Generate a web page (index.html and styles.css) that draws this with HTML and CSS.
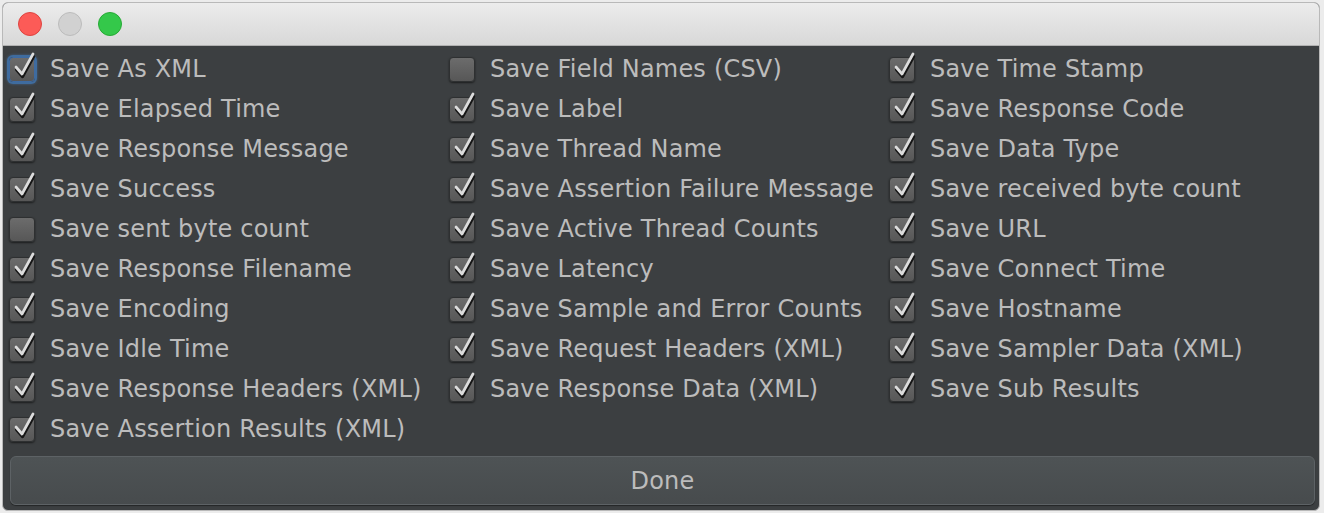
FILE: index.html
```html
<!DOCTYPE html>
<html>
<head>
<meta charset="utf-8">
<link rel="stylesheet" href="styles.css">
</head>
<body>
<div class="window">
  <div class="titlebar">
    <span class="light red"></span>
    <span class="light gray"></span>
    <span class="light green"></span>
  </div>
  <div class="content">
    <div class="grid">
      <label class="item"><span class="box focus on"></span><span class="text">Save As XML</span></label>
      <label class="item"><span class="box"></span><span class="text">Save Field Names (CSV)</span></label>
      <label class="item"><span class="box on"></span><span class="text">Save Time Stamp</span></label>

      <label class="item"><span class="box on"></span><span class="text">Save Elapsed Time</span></label>
      <label class="item"><span class="box on"></span><span class="text">Save Label</span></label>
      <label class="item"><span class="box on"></span><span class="text">Save Response Code</span></label>

      <label class="item"><span class="box on"></span><span class="text">Save Response Message</span></label>
      <label class="item"><span class="box on"></span><span class="text">Save Thread Name</span></label>
      <label class="item"><span class="box on"></span><span class="text">Save Data Type</span></label>

      <label class="item"><span class="box on"></span><span class="text">Save Success</span></label>
      <label class="item"><span class="box on"></span><span class="text">Save Assertion Failure Message</span></label>
      <label class="item"><span class="box on"></span><span class="text">Save received byte count</span></label>

      <label class="item"><span class="box"></span><span class="text">Save sent byte count</span></label>
      <label class="item"><span class="box on"></span><span class="text">Save Active Thread Counts</span></label>
      <label class="item"><span class="box on"></span><span class="text">Save URL</span></label>

      <label class="item"><span class="box on"></span><span class="text">Save Response Filename</span></label>
      <label class="item"><span class="box on"></span><span class="text">Save Latency</span></label>
      <label class="item"><span class="box on"></span><span class="text">Save Connect Time</span></label>

      <label class="item"><span class="box on"></span><span class="text">Save Encoding</span></label>
      <label class="item"><span class="box on"></span><span class="text">Save Sample and Error Counts</span></label>
      <label class="item"><span class="box on"></span><span class="text">Save Hostname</span></label>

      <label class="item"><span class="box on"></span><span class="text">Save Idle Time</span></label>
      <label class="item"><span class="box on"></span><span class="text">Save Request Headers (XML)</span></label>
      <label class="item"><span class="box on"></span><span class="text">Save Sampler Data (XML)</span></label>

      <label class="item"><span class="box on"></span><span class="text">Save Response Headers (XML)</span></label>
      <label class="item"><span class="box on"></span><span class="text">Save Response Data (XML)</span></label>
      <label class="item"><span class="box on"></span><span class="text">Save Sub Results</span></label>

      <label class="item"><span class="box on"></span><span class="text">Save Assertion Results (XML)</span></label>
    </div>
    <button class="done">Done</button>
  </div>
</div>
</body>
</html>
```

FILE: styles.css
```css
html, body {
  margin: 0;
  padding: 0;
  background: #ececec;
}
body {
  width: 1324px;
  height: 513px;
  overflow: hidden;
  font-family: "DejaVu Sans", "Liberation Sans", sans-serif;
}
.window {
  margin: 2px 0 0 2px;
  width: 1318px;
  height: 509px;
  border: 1px solid #b9b9b9;
  border-radius: 6px;
  overflow: hidden;
  box-sizing: border-box;
  display: flex;
  flex-direction: column;
  background: #3c3f41;
}
.titlebar {
  height: 42px;
  flex: none;
  background: linear-gradient(#ececec, #d8d8d8);
  border-bottom: 1px solid #b1b1b1;
  display: flex;
  align-items: center;
  gap: 16px;
  padding-left: 15px;
  box-sizing: content-box;
}
.light {
  width: 24px;
  height: 24px;
  border-radius: 50%;
  box-sizing: border-box;
}
.red { background: #fc5b57; border: 1px solid #de4440; }
.gray { background: #d1d1d1; border: 1px solid #bcbcbc; }
.green { background: #34c84a; border: 1px solid #27aa35; }

.content {
  flex: 1;
  display: flex;
  flex-direction: column;
  padding: 3px 6px 0 6px;
}
.grid {
  display: grid;
  grid-template-columns: 440px 440px 1fr;
  grid-auto-rows: 40px;
}
.item {
  display: flex;
  align-items: center;
  gap: 15px;
  color: #bcbcbc;
  font-size: 24px;
  letter-spacing: 0.2px;
  white-space: nowrap;
}
.box {
  position: relative;
  width: 26px;
  height: 25px;
  flex: none;
  box-sizing: border-box;
  border: 1px solid #2e3031;
  border-radius: 4px;
  background: linear-gradient(#6c6c6c, #575757);
  box-shadow: 0 1px 2px rgba(0,0,0,0.55);
}
.box.focus {
  border-color: #3d6aa3;
  box-shadow: 0 0 0 2px #3f6c9e, 0 0 3px 2px rgba(80,140,210,0.5);
}
.box.on::after {
  content: "";
  position: absolute;
  left: 1px;
  top: -7px;
  width: 26px;
  height: 30px;
  background: url("data:image/svg+xml;utf8,<svg xmlns='http://www.w3.org/2000/svg' width='26' height='30' viewBox='0 0 26 30'><polyline points='5,17 11,24 22,4' fill='none' stroke='%23151515' stroke-width='3.2' stroke-linecap='round' stroke-linejoin='round' transform='translate(0.6,1.6)'/><polyline points='5,16 11,23 22,3' fill='none' stroke='%23dcdcdc' stroke-width='2.7' stroke-linecap='round' stroke-linejoin='round'/></svg>") no-repeat;
}
.done {
  margin-top: 7px;
  height: 49px;
  width: 1305px;
  margin-left: 1px;
  font-family: "DejaVu Sans", "Liberation Sans", sans-serif;
  font-size: 24px;
  letter-spacing: 0.2px;
  color: #bcbcbc;
  background: linear-gradient(#4e5355, #474b4d);
  border: 1px solid #5d6265;
  border-radius: 6px;
  box-shadow: 0 1px 1px rgba(0,0,0,0.4);
  padding: 0;
}
```
